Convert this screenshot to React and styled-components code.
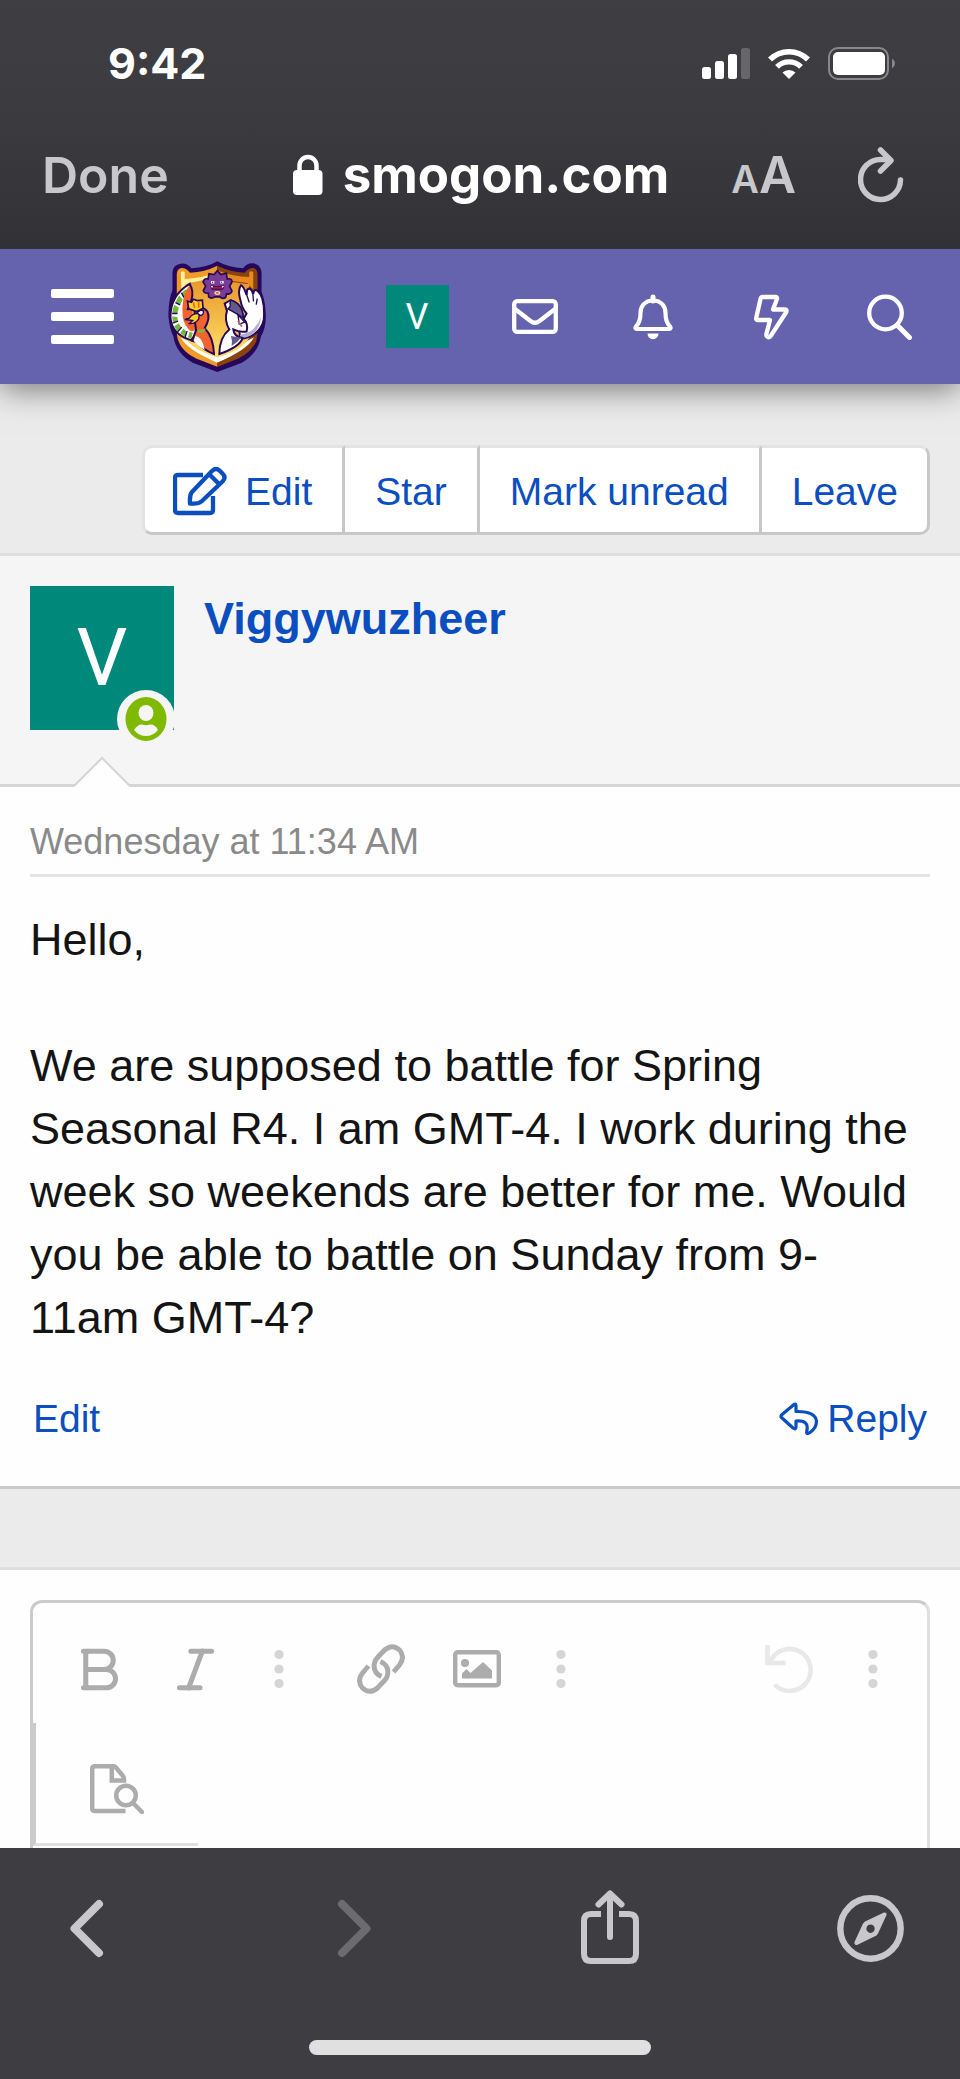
import React from "react";
import styled, { createGlobalStyle } from 'styled-components';
import { Bold, Italic } from 'lucide-react';

const GlobalStyle = createGlobalStyle`
  body {
    margin: 0;
    background: #ebebeb;
    font-family: "Liberation Sans", Arial, sans-serif;
    color: #141414;
  }
  * {
    box-sizing: border-box;
  }
  button {
    margin: 0;
    padding: 0;
    border: none;
    background: none;
    font: inherit;
    color: inherit;
    cursor: pointer;
  }
  a {
    text-decoration: none;
    color: #0b4ebf;
  }
  svg {
    display: block;
    flex: none;
  }
`
const Screen = styled.div`
  min-height: 100vh;
  display: flex;
  flex-direction: column;
`
const BrowserTop = styled.header`
  position: relative;
  z-index: 1;
  background: linear-gradient(#3f3f43, #3b3b3f 50%, #323236);
  font-family: Inter, sans-serif;
  color: #fff;
`
const StatusBar = styled.div`
  display: flex;
  align-items: center;
  justify-content: space-between;
  height: 126px;
  padding: 0 65px 0 108px;
`
const Time = styled.span`
  font-size: 43px;
  font-weight: 700;
`
const StatusIcons = styled.div`
  display: flex;
  align-items: center;
  gap: 18px;
`
const AddressBar = styled.div`
  display: flex;
  align-items: center;
  gap: 62px;
  height: 123px;
  padding: 0 56px 26px 42px;
  color: #c7c7cc;
`
const DoneButton = styled.button`
  && {
    font-size: 50px;
    font-weight: 600;
  }
`
const Address = styled.div`
  display: flex;
  align-items: center;
  gap: 20px;
  margin-left: auto;
  font-size: 51px;
  font-weight: 700;
  color: #fff;
`
const TextSize = styled.button`
  && {
    display: flex;
    align-items: baseline;
    font-size: 51px;
    font-weight: 600;
  }
`
const SmallLetter = styled.span`
  font-size: 38px;
`
const Nav = styled.nav`
  position: relative;
  display: flex;
  align-items: center;
  height: 135px;
  padding: 0 12px 0 51px;
  background: #6563ae;
  color: #fff;
  box-shadow: 0 5px 30px rgba(0, 0, 0, 0.5);
`
const MenuButton = styled.button`
  display: grid;
  gap: 14px;
  width: 63px;
`
const MenuLine = styled.span`
  height: 9px;
  border-radius: 2px;
  background: #fff;
`
const LogoLink = styled.a`
  margin: 0 auto 0 54px;
`
const NavItem = styled.a`
  display: flex;
  align-items: center;
  justify-content: center;
  width: 118px;
  height: 100%;
  color: #fff;
`
const Avatar = styled.span`
  position: relative;
  display: flex;
  align-items: center;
  justify-content: center;
  width: ${props => props.size}px;
  height: ${props => props.size}px;
  background: #00897b;
  font-family: Roboto, sans-serif;
  font-size: ${props => props.fontSize}px;
  color: #fff;
`
const Actions = styled.div`
  display: flex;
  justify-content: flex-end;
  padding: 61px 30px 18px;
  border-bottom: 3px solid #dfdfdf;
`
const ButtonGroup = styled.div`
  display: flex;
`
const ActionButton = styled.button`
  && {
    display: flex;
    align-items: center;
    gap: 18px;
    height: 90px;
    padding: 3px 30px 0;
    border: 3px solid;
    border-color: #e3e3e3 #c8c8c8 #c8c8c8 #e3e3e3;
    border-left-width: 0;
    background: #fff;
    font-size: 39px;
    color: #0b4ebf;
  }
  &&:first-child {
    padding-left: 28px;
    border-left-width: 3px;
    border-radius: 10px 0 0 10px;
  }
  &&:last-child {
    padding-right: 29px;
    border-radius: 0 10px 10px 0;
  }
`
const UserHeader = styled.div`
  position: relative;
  display: flex;
  gap: 30px;
  padding: 30px 30px 54px;
  border-bottom: 3px solid #d5d5d5;
  background: #f5f5f5;
`
const UserName = styled.a`
  font-size: 45px;
  line-height: 66px;
  font-weight: 700;
`
const OnlineBadge = styled.svg`
  position: absolute;
  right: 0;
  bottom: -18px;
`
const Notch = styled.svg`
  position: absolute;
  left: 73px;
  bottom: -3px;
`
const Post = styled.article`
  padding: 30px 30px 40px;
  border-bottom: 3px solid #cbcbcb;
  background: #fefefe;
`
const PostDate = styled.time`
  display: block;
  padding-bottom: 7px;
  border-bottom: 3px solid #e4e4e4;
  font-size: 36px;
  line-height: 50px;
  color: #8a8a8a;
`
const PostText = styled.p`
  margin: 31px 0 43px;
  padding-right: 10px;
  font-size: 45px;
  line-height: 63px;
`
const PostFooter = styled.footer`
  display: flex;
  justify-content: space-between;
  padding: 0 3px;
  font-size: 39px;
  line-height: 54px;
`
const ReplyLink = styled.a`
  display: flex;
  align-items: center;
  gap: 8px;
`
const ReplyBox = styled.section`
  display: flex;
  flex: 1;
  margin-top: 78px;
  padding: 30px 30px 0;
  border-top: 3px solid #dfdfdf;
  background: #fefefe;
`
const Editor = styled.div`
  flex: 1;
  border: 3px solid;
  border-color: #cbcbcb #dfdfdf #cbcbcb #cbcbcb;
  border-bottom: none;
  border-radius: 12px 12px 0 0;
  color: #acacac;
`
const Toolbar = styled.div`
  display: flex;
  align-items: center;
  height: 120px;
  padding: 12px 18px 0;
`
const ToolGroup = styled.div`
  display: flex;
  margin-right: ${props => props.$push ? 'auto' : '18px'};
  &:last-child {
    margin-right: 0;
  }
`
const ToolButton = styled.button`
  && {
    display: flex;
    align-items: center;
    justify-content: center;
    width: ${props => props.$narrow ? 72 : 96}px;
    height: 60px;
    color: ${props => props.disabled ? '#e8e8e8' : props.$narrow ? '#d5d5d5' : '#acacac'};
  }
`
const PreviewTab = styled.div`
  display: flex;
  align-items: center;
  justify-content: center;
  width: 165px;
  height: 123px;
  padding-top: 12px;
  border-left: 3px solid #cbcbcb;
  border-bottom: 3px solid #dfdfdf;
`
const BrowserBottom = styled.footer`
  height: 231px;
  padding-top: 41px;
  background: #3d3d42;
`
const BrowserTools = styled.div`
  display: flex;
  justify-content: space-between;
  padding: 0 56px 0 53px;
  color: #c7c7cc;
`
const HomeIndicator = styled.div`
  width: 342px;
  height: 15px;
  margin: 73px auto 0;
  border-radius: 8px;
  background: #e0e0e0;
`

const Signal = () => (
  <svg width="48" height="31" viewBox="0 0 48 31" fill="#fff">
    <rect y="19" width="9" height="12" rx="2.5" />
    <rect x="13" y="13" width="9" height="18" rx="2.5" />
    <rect x="26" y="6" width="9" height="25" rx="2.5" />
    <rect x="39" width="9" height="31" rx="2.5" fill="#67676b" />
  </svg>
)

const Wifi = () => (
  <svg width="42" height="31" viewBox="0 0 42 31">
    <path d="M2 11.500a27 27 0 0 1 38 0" fill="none" stroke="#fff" strokeWidth="5.600" />
    <path d="M9 18.800a17 17 0 0 1 24 0" fill="none" stroke="#fff" strokeWidth="5.400" />
    <path d="M14.500 24.500a9.500 9.500 0 0 1 13 0L21 31z" fill="#fff" />
  </svg>
)

const Battery = () => (
  <svg width="67" height="33" viewBox="0 0 67 33">
    <rect x="1" y="1" width="59" height="31" rx="9" fill="none" stroke="#88888c" strokeWidth="2" />
    <rect x="5" y="5" width="52" height="23" rx="5" fill="#fff" />
    <path d="M64 11.500q3 2 3 5t-3 5z" fill="#88888c" />
  </svg>
)

const Lock = () => (
  <svg width="30" height="41" viewBox="0 0 30 41">
    <path d="M6.500 19V11.500a8.500 8.500 0 0 1 17 0V19" fill="none" stroke="#fff" strokeWidth="4.500" />
    <rect x="0" y="16" width="29.500" height="25" rx="4" fill="#fff" />
  </svg>
)

const Reload = () => (
  <svg width="46" height="56" viewBox="0 0 46 56" fill="none" stroke="currentColor" strokeWidth="5.500" strokeLinecap="round" strokeLinejoin="round">
    <path d="M42.500 33a20 20 0 1 1-20-20.500h9" />
    <path d="M22.500 3l10.500 10.500-10.500 10.500" />
  </svg>
)

// shield emblem with the two birds
const Logo = () => (
  <svg width="98" height="111" viewBox="54 32 294 334">
    <defs>
      <linearGradient id="field" x1="0" y1="0" x2="0" y2="1">
        <stop offset="0" stopColor="#e8962a" />
        <stop offset="1" stopColor="#ffe06a" />
      </linearGradient>
    </defs>
    <path d="M202 33Q170 52 124 54Q112 38 92 40Q68 44 67 66V120Q54 150 55 200Q58 235 70 260Q78 310 128 338L202 366L276 338Q325 310 333 260Q348 235 348 195Q346 150 335 125V66Q332 42 310 39Q290 38 280 54Q236 52 202 33Z" fill="#26075c" />
    <path d="M202 46Q165 65 120 67Q108 52 94 53Q80 56 80 72V250Q84 300 140 326L202 350V46Z" fill="#f09a28" />
    <path d="M202 46Q240 65 284 67Q296 52 310 53Q323 56 323 72V250Q320 300 264 326L202 350V46Z" fill="#8a430b" />
    <path d="M92 66q6-6 12 0v20q50-2 98-20v10q-44 18-88 22l-20 20z" fill="#fff0a0" />
    <path d="M202 60q46 20 96 20v-14q6-6 12 0v52l-18-20q-46-2-90-22z" fill="#e98a20" />
    <path d="M92 262Q110 298 202 338Q294 298 312 262L202 316Z" fill="#fff" />
    <path d="M202 338Q290 304 316 266L320 272Q306 310 202 350Z" fill="#8a430b" />
    <path d="M106 102Q160 96 202 84Q246 98 298 102V262Q280 300 202 322Q126 300 106 262Z" fill="url(#field)" />
    <path d="M202 61l11 12 16-4 3 17q14-3 14 9l-7 13 7 14q-3 12-16 9l-3 11q-10 6-17-2h-16q-10 7-18 0l-1-11q-14 1-15-9l7-12-8-13q3-12 15-9l3-16 15 3z" fill="#7a3c96" stroke="#26075c" strokeWidth="5" />
    <path d="M183 96h10M211 96h10" stroke="#fff" strokeWidth="7" />
    <path d="M188 94v4M215 94v4" stroke="#26075c" strokeWidth="3" />
    <path d="M182 107q20 4 40 0l-4 10h-32z" fill="#b31640" stroke="#26075c" strokeWidth="3" />
    <path d="M182 107l4 6 3-6zM215 107l3 6 4-6z" fill="#fff" />
    <ellipse cx="202" cy="128" rx="7" ry="4" fill="none" stroke="#ffe07a" strokeWidth="4" />
    <path d="M119 101Q60 135 61 202Q64 252 122 270L148 242L112 220L124 150Z" fill="#fff" stroke="#26075c" strokeWidth="6" />
    <path d="M108 116L94 128L102 142L116 128ZM87 136L76 155L90 164L98 148ZM72 164L66 188L82 190L86 172ZM66 198L68 218L83 212L82 201ZM72 228L82 246L94 231L86 220ZM90 249L105 261L110 244L100 236ZM114 262L124 265L128 248L118 246Z" fill="#74b83a" />
    <path d="M94 128L102 142M76 157L90 164M66 190L82 190M67 219L84 213M82 246L95 231M105 261L111 243" stroke="#26075c" strokeWidth="4" />
    <path d="M120 103Q132 122 122 150L130 210L150 236L124 244Q102 230 98 200Q94 160 104 132Q110 116 120 103Z" fill="#f3642c" />
    <path d="M119 101Q132 122 124 150L112 180" fill="none" stroke="#26075c" strokeWidth="6" />
    <path d="M134 172Q160 168 172 184Q182 204 164 234Q190 260 192 312Q158 298 140 276L126 272L138 240L134 210Z" fill="#f3642c" stroke="#26075c" strokeWidth="6" />
    <path d="M136 258Q158 262 164 300Q144 290 131 273Z" fill="#fff" />
    <path d="M146 240Q158 244 165 236L159 246L144 246Z" fill="#79bb3f" stroke="#79bb3f" strokeWidth="4" />
    <path d="M116 176L112 153L124 156L130 147L142 151L157 150L159 174L140 184Z" fill="#ffd21f" stroke="#26075c" strokeWidth="5" />
    <path d="M130 156l4 18M146 155v18" stroke="#f3642c" strokeWidth="5" />
    <path d="M104 208L118 204Q128 188 148 191L146 206Q136 222 118 220L128 211Z" fill="#ffd21f" stroke="#26075c" strokeWidth="4" />
    <path d="M141 188l10-8 9 2q2 12-9 14z" fill="#fff" stroke="#26075c" strokeWidth="4" />
    <path d="M273 105Q262 120 272 152Q276 175 290 190L268 230L270 266Q330 260 342 208Q346 140 323 122Q312 114 310 132Q302 108 292 118L290 134Q280 106 273 105Z" fill="#fff" stroke="#26075c" strokeWidth="6" />
    <path d="M270 254Q316 248 334 200Q326 262 272 264Z" fill="#b2aed0" />
    <path d="M290 132l8 25M309 132l2 22M322 145l-3 18" stroke="#26075c" strokeWidth="4" />
    <path d="M224 160L241 150Q278 160 280 205Q296 220 290 244Q270 248 250 238Q252 260 278 264Q270 290 208 312Q208 262 238 238Q222 210 231 182Z" fill="#fff" stroke="#26075c" strokeWidth="6" />
    <path d="M242 150Q278 160 280 204L262 192L234 176Q244 168 240 160Z" fill="#625a8a" stroke="#26075c" strokeWidth="4" />
    <path d="M243 258Q262 262 274 262Q262 278 245 288Q248 272 243 258Z" fill="#625a8a" />
    <path d="M264 194L284 216L268 222Z" fill="#fff" stroke="#26075c" strokeWidth="4" />
    <path d="M264 212l12 18" stroke="#c06080" strokeWidth="5" />
  </svg>
)

const Mail = () => (
  <svg width="46" height="36" viewBox="0 0 46 36" fill="none" stroke="currentColor" strokeWidth="4.300">
    <rect x="2.200" y="2.200" width="41.600" height="30.600" rx="3" />
    <path d="M3 10l15.500 12q4.500 3.500 9 0L43 10" />
  </svg>
)

const Bell = () => (
  <svg width="40" height="46" viewBox="0 0 40 46">
    <path d="M20 6.500C12 6.500 7.500 12 7.500 19C7.500 27 5.500 30 3 32.500Q1.500 34.800 4 35H36Q38.500 34.800 37 32.500C34.500 30 32.500 27 32.500 19C32.500 12 28 6.500 20 6.500Z" fill="none" stroke="currentColor" strokeWidth="4.200" />
    <path d="M20 7V3" stroke="currentColor" strokeWidth="5" strokeLinecap="round" />
    <path d="M14.500 39.500h11a5.500 5.700 0 0 1-11 0z" fill="currentColor" />
  </svg>
)

const Bolt = () => (
  <svg width="35" height="46" viewBox="0 0 35 46" fill="none" stroke="currentColor" strokeWidth="4.300" strokeLinejoin="round">
    <path d="M8.500 3H21.500q2 0 1.500 2L19 15.500H31q2.500 0 1 3L17 41.500q-2 3-4 1q-1-1-.5-3L16 26H4q-2.200 0-1.800-2L6.500 5q.5-2 2-2z" />
  </svg>
)

const Search = () => (
  <svg width="45" height="46" viewBox="0 0 45 46" fill="none" stroke="currentColor">
    <circle cx="18.500" cy="19" r="16.300" strokeWidth="4.300" />
    <path d="M31 32l11.500 11.500" strokeWidth="5" strokeLinecap="round" />
  </svg>
)

const Pencil = () => (
  <svg width="54" height="50" viewBox="0 0 54 50" fill="none" stroke="currentColor" strokeWidth="4.300" strokeLinejoin="round">
    <path d="M30 8H5q-3 0-3 3v32q0 3 3 3h32q3 0 3-3V29" />
    <path d="M17 36.500q-.5-8 1.500-11L39 4q4-4 8 0l2.500 2.500q4 4 0 8L29 34q-4 3.500-12 2.500zM36 7l10.500 10.500" />
  </svg>
)

const Dots = () => (
  <svg width="10" height="40" viewBox="0 0 10 40" fill="currentColor">
    <circle cx="5" cy="5.500" r="4.600" />
    <circle cx="5" cy="20" r="4.600" />
    <circle cx="5" cy="34.500" r="4.600" />
  </svg>
)

const Chain = () => (
  <svg width="48" height="50" viewBox="0 0 48 50" fill="none" stroke="currentColor" strokeWidth="4.900">
    <path d="M24.500 32.500q-9-4-7-13.500q.5-3 3-5.500l7-7.500q8-6.500 15 0q6 7 0 15L36.500 28" />
    <path d="M23.500 17.500q9 4 7 13.500q-.5 3-3 5.500l-7 7.500q-8 6.500-15 0q-6-7 0-15l6-7" />
  </svg>
)

const Picture = () => (
  <svg width="48" height="38" viewBox="0 0 48 38">
    <rect x="2.200" y="2.200" width="43.600" height="33" rx="2.500" fill="none" stroke="currentColor" strokeWidth="4.400" />
    <circle cx="12" cy="13" r="4" fill="currentColor" />
    <path d="M9 28.500v-5l4.500-4.500 4 4L30 12l9 8.500v8z" fill="currentColor" />
  </svg>
)

const Undo = () => (
  <svg width="48" height="48" viewBox="0 0 48 48" fill="none" stroke="currentColor" strokeWidth="4.600">
    <path d="M5 17.500A21 21 0 1 1 9.500 39.500" />
    <path d="M2.500 0v18h18" />
  </svg>
)

const PagePreview = () => (
  <svg width="54" height="50" viewBox="0 0 54 50" fill="none" stroke="currentColor" strokeWidth="4.500">
    <path d="M35.500 47H5q-2.800 0-2.800-2.800V5q0-2.800 2.800-2.800h18q1.500 0 3 1.300l7 8.500q1 1 1 4.500H21.800V3" />
    <circle cx="36" cy="31.500" r="9.800" />
    <path d="M43.500 39.500l8.500 8.500" strokeLinecap="round" />
  </svg>
)

const ReplyArrow = () => (
  <svg width="40" height="34" viewBox="0 0 40 34" fill="none" stroke="currentColor" strokeWidth="3.200" strokeLinejoin="round">
    <path d="M15 2.500L2.500 13Q1.500 14.500 2.500 15.500L14 26Q17 28 17 25V19Q30 18 28 28Q26.500 33.500 31 30.500Q37.500 26 37.500 19Q36 9 17 9.500V4Q17 1 15 2.500Z" />
  </svg>
)

const Chevron = ({ d, stroke }) => (
  <svg width="67" height="67" viewBox="0 0 67 67" fill="none" stroke={stroke} strokeWidth="8" strokeLinecap="round" strokeLinejoin="round">
    <path d={d} />
  </svg>
)

const Share = () => (
  <svg width="67" height="78" viewBox="0 0 67 78" fill="none" stroke="currentColor" strokeWidth="6" strokeLinecap="round" strokeLinejoin="round">
    <path d="M25 25H15q-7 0-7 7v33q0 7 7 7h38q7 0 7-7V32q0-7-7-7H43" strokeLinecap="butt" />
    <path d="M34 48V5M22.500 15.500L34 4.500l11.500 11" />
  </svg>
)

const Compass = () => (
  <svg width="67" height="67" viewBox="0 0 67 67">
    <circle cx="33.500" cy="33.500" r="30.200" fill="none" stroke="currentColor" strokeWidth="6.400" />
    <path fillRule="evenodd" d="M47 17.500Q50 17 49.500 20L41 38.500L39.500 40.500L20 50Q17 50.500 17.500 47L26 28.500L28 26.500ZM33.500 29.500a4.200 4.200 0 1 0 .1 0z" fill="currentColor" />
  </svg>
)

const App = () => (
  <Screen>
    <GlobalStyle />
    <BrowserTop>
      <StatusBar>
        <Time>9:42</Time>
        <StatusIcons>
          <Signal />
          <Wifi />
          <Battery />
        </StatusIcons>
      </StatusBar>
      <AddressBar>
        <DoneButton>Done</DoneButton>
        <Address>
          <Lock />
          smogon.com
        </Address>
        <TextSize aria-label="Text size"><SmallLetter>A</SmallLetter>A</TextSize>
        <button aria-label="Reload"><Reload /></button>
      </AddressBar>
    </BrowserTop>

    <Nav>
      <MenuButton aria-label="Menu">
        <MenuLine />
        <MenuLine />
        <MenuLine />
      </MenuButton>
      <LogoLink href="#" aria-label="Smogon"><Logo /></LogoLink>
      <NavItem href="#" aria-label="Account"><Avatar size={63} fontSize={36}>V</Avatar></NavItem>
      <NavItem href="#" aria-label="Conversations"><Mail /></NavItem>
      <NavItem href="#" aria-label="Alerts"><Bell /></NavItem>
      <NavItem href="#" aria-label="What's new"><Bolt /></NavItem>
      <NavItem href="#" aria-label="Search"><Search /></NavItem>
    </Nav>

    <Actions>
      <ButtonGroup>
        <ActionButton><Pencil />Edit</ActionButton>
        <ActionButton>Star</ActionButton>
        <ActionButton>Mark unread</ActionButton>
        <ActionButton>Leave</ActionButton>
      </ButtonGroup>
    </Actions>

    <UserHeader>
      <Avatar size={144} fontSize={80}>
        V
        <OnlineBadge width="57" height="58" viewBox="0 0 57 58">
          <circle cx="29" cy="29" r="29" fill="#f5f5f5" />
          <ellipse cx="29" cy="29" rx="20.500" ry="22" fill="#7fb900" />
          <ellipse cx="29" cy="23" rx="7.500" ry="8" fill="#f5f5f5" />
          <path d="M17 40q4-6 8-5.500q4 1.500 8 0q5-.5 8 5.500q-5 6-12 6t-12-6z" fill="#f5f5f5" />
        </OnlineBadge>
      </Avatar>
      <UserName href="#">Viggywuzheer</UserName>
      <Notch width="58" height="31" viewBox="0 0 58 31">
        <path d="M1 31L29 2L57 31z" fill="#fefefe" />
        <path d="M1 30L29 2L57 30" fill="none" stroke="#d5d5d5" strokeWidth="2" />
      </Notch>
    </UserHeader>

    <Post>
      <PostDate>Wednesday at 11:34 AM</PostDate>
      <PostText>
        Hello,<br />
        <br />
        We are supposed to battle for Spring Seasonal R4. I am GMT-4. I work during the week so weekends are better for me. Would you be able to battle on Sunday from 9-<wbr />11am GMT-4?
      </PostText>
      <PostFooter>
        <a href="#">Edit</a>
        <ReplyLink href="#"><ReplyArrow />Reply</ReplyLink>
      </PostFooter>
    </Post>

    <ReplyBox>
      <Editor>
        <Toolbar>
          <ToolGroup>
            <ToolButton aria-label="Bold">
              <Bold size={55} strokeWidth={2.2}>
                <path d="M5 4h2M5 20h2" />
              </Bold>
            </ToolButton>
            <ToolButton aria-label="Italic"><Italic size={55} strokeWidth={2.2} /></ToolButton>
            <ToolButton $narrow aria-label="More text options"><Dots /></ToolButton>
          </ToolGroup>
          <ToolGroup $push>
            <ToolButton aria-label="Insert link"><Chain /></ToolButton>
            <ToolButton aria-label="Insert image"><Picture /></ToolButton>
            <ToolButton $narrow aria-label="More insert options"><Dots /></ToolButton>
          </ToolGroup>
          <ToolGroup>
            <ToolButton disabled aria-label="Undo"><Undo /></ToolButton>
            <ToolButton $narrow aria-label="More options"><Dots /></ToolButton>
          </ToolGroup>
        </Toolbar>
        <PreviewTab>
          <ToolButton aria-label="Preview"><PagePreview /></ToolButton>
        </PreviewTab>
      </Editor>
    </ReplyBox>

    <BrowserBottom>
      <BrowserTools>
        <button aria-label="Back"><Chevron d="M46 9L21.500 33.500L46 58" stroke="#c7c7cc" /></button>
        <button aria-label="Forward"><Chevron d="M28 9L52.500 33.500L28 58" stroke="#6c6c70" /></button>
        <button aria-label="Share"><Share /></button>
        <button aria-label="Open in browser"><Compass /></button>
      </BrowserTools>
      <HomeIndicator />
    </BrowserBottom>
  </Screen>
)

export default App;
